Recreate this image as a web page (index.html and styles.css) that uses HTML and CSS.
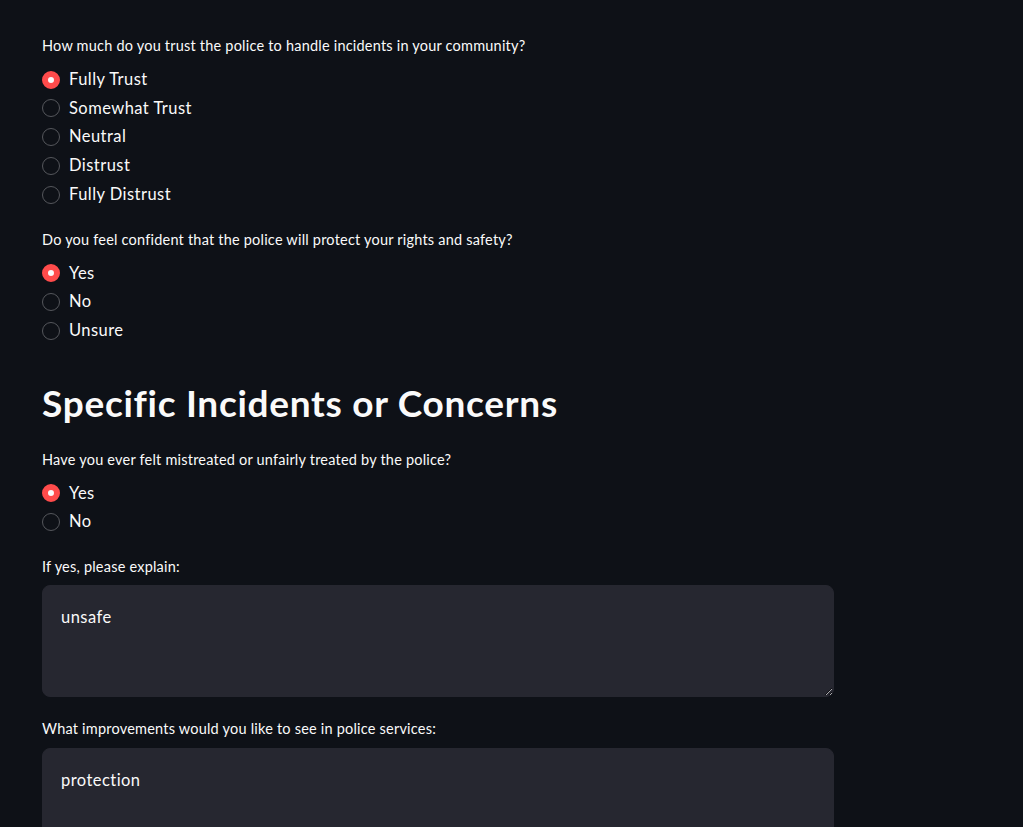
FILE: index.html
```html
<!DOCTYPE html>
<html lang="en">
<head>
<meta charset="utf-8">
<title>Survey</title>
<link rel="stylesheet" href="styles.css">
</head>
<body>
<main class="main">
  <section class="field">
    <p class="label">How much do you trust the police to handle incidents in your community?</p>
    <div class="options">
      <div class="option"><span class="radio checked"></span><span>Fully Trust</span></div>
      <div class="option"><span class="radio"></span><span>Somewhat Trust</span></div>
      <div class="option"><span class="radio"></span><span>Neutral</span></div>
      <div class="option"><span class="radio"></span><span>Distrust</span></div>
      <div class="option"><span class="radio"></span><span>Fully Distrust</span></div>
    </div>
  </section>
  <section class="field">
    <p class="label">Do you feel confident that the police will protect your rights and safety?</p>
    <div class="options">
      <div class="option"><span class="radio checked"></span><span>Yes</span></div>
      <div class="option"><span class="radio"></span><span>No</span></div>
      <div class="option"><span class="radio"></span><span>Unsure</span></div>
    </div>
  </section>
  <h2 class="heading">Specific Incidents or Concerns</h2>
  <section class="field">
    <p class="label">Have you ever felt mistreated or unfairly treated by the police?</p>
    <div class="options">
      <div class="option"><span class="radio checked"></span><span>Yes</span></div>
      <div class="option"><span class="radio"></span><span>No</span></div>
    </div>
  </section>
  <section class="field tight">
    <p class="label">If yes, please explain:</p>
    <textarea class="area">unsafe</textarea>
  </section>
  <section class="field tight">
    <p class="label">What improvements would you like to see in police services:</p>
    <textarea class="area">protection</textarea>
  </section>
</main>
</body>
</html>
```

FILE: styles.css
```css
html, body {
  margin: 0;
  padding: 0;
  background: #0e1117;
  color: #fafafa;
  color-scheme: dark;
  font-family: "Lato", "Noto Sans", sans-serif;
}
.main {
  width: 792px;
  padding: 35px 0 0 42px;
  display: flex;
  flex-direction: column;
}
.field {
  display: flex;
  flex-direction: column;
  gap: 9.5px;
  margin-bottom: 21px;
}
.field.tight {
  gap: 7px;
  margin-bottom: 21px;
}
.label {
  margin: 0;
  font-size: 14.5px;
  letter-spacing: 0.21px;
  line-height: 22.4px;
}
.options {
  display: flex;
  flex-direction: column;
  gap: 3.2px;
}
.option {
  display: flex;
  align-items: center;
  gap: 9px;
  font-size: 16.5px;
  letter-spacing: 0.45px;
  line-height: 25.6px;
  height: 25.6px;
}
.radio {
  box-sizing: border-box;
  width: 18px;
  height: 18px;
  border-radius: 50%;
  border: 1px solid #55575c;
  background: #0e1117;
  flex: none;
}
.radio.checked {
  border: 6px solid #ff4b4b;
  background: #fafafa;
}
.heading {
  margin: 16px 0 25px;
  font-size: 37px;
  line-height: 43px;
  font-weight: 700;
  letter-spacing: 0.72px;
}
.area {
  box-sizing: border-box;
  width: 792px;
  height: 112px;
  margin: 0;
  padding: 19px 18px;
  background: #262730;
  color: #fafafa;
  border: 1px solid #262730;
  border-radius: 8px;
  font-family: inherit;
  font-size: 16.5px;
  letter-spacing: 0.45px;
  line-height: 25.6px;
  resize: vertical;
  outline: none;
}
```
